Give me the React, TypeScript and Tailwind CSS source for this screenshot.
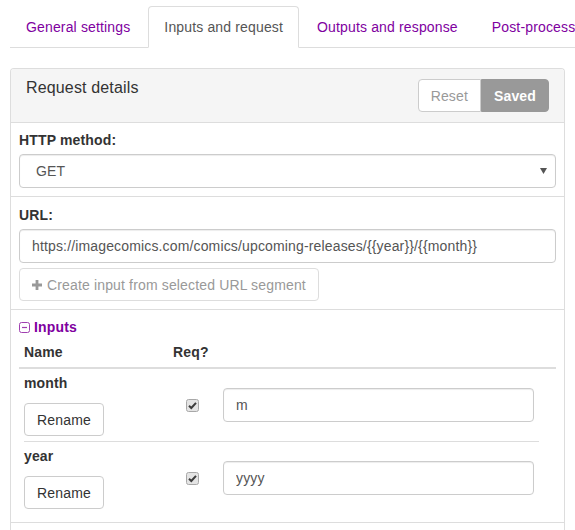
import { useState } from 'react';

const tabs = ['General settings', 'Inputs and request', 'Outputs and response', 'Post-processing'];

type Input = {
    name: string;
    required: boolean;
    placeholder: string;
};

const inputs: Input[] = [
    { name: 'month', required: true, placeholder: 'm' },
    { name: 'year', required: true, placeholder: 'yyyy' },
];

function Checkbox() {
    return (
        <svg width="13" height="13" viewBox="0 0 13 13">
            <rect x="0.5" y="0.5" width="12" height="12" rx="2" fill="#e4e4e4" stroke="#a8a8a8" />
            <path d="M3 6.8 L5.3 9 L10 3.8" fill="none" stroke="#3c3c3c" strokeWidth="2" />
        </svg>
    );
}

export default function App() {
    const [active, setActive] = useState(1);
    const [url, setUrl] = useState(
        'https://imagecomics.com/comics/upcoming-releases/{{year}}/{{month}}',
    );

    return (
        <div className="min-h-[530px] w-[575px] overflow-hidden bg-white font-['Liberation_Sans',Arial,sans-serif] text-[14px] leading-[20px] tracking-[0.15px] text-[#333]">
            {/* Tabs */}
            <ul className="ml-[10px] mt-[6px] flex whitespace-nowrap border-b border-[#ddd]">
                {tabs.map((tab, i) => (
                    <li key={tab} className="-mb-px mr-[2px]">
                        <a
                            onClick={() => setActive(i)}
                            className={
                                i === active
                                    ? 'block cursor-pointer rounded-t-[4px] border border-[#ddd] border-b-white bg-white px-[15px] py-[10px] text-[#555]'
                                    : 'block cursor-pointer rounded-t-[4px] border border-transparent px-[15px] py-[10px] text-[#8000a0]'
                            }
                        >
                            {tab}
                        </a>
                    </li>
                ))}
            </ul>

            {/* Panel */}
            <div className="ml-[10px] mt-[20px] w-[555px] rounded-t-[4px] border border-b-0 border-[#ddd]">
                <div className="flex items-start justify-between rounded-t-[3px] border-b border-[#ddd] bg-[#f5f5f5] px-[15px] py-[10px]">
                    <h3 className="text-[16px] leading-[18px] text-[#333]">Request details</h3>
                    <div className="flex h-[33px]">
                        <button className="rounded-l-[4px] border border-[#ccc] bg-white px-[12px] text-[#999]">
                            Reset
                        </button>
                        <button className="rounded-r-[4px] border border-[#999] bg-[#999] px-[12px] font-bold text-white">
                            Saved
                        </button>
                    </div>
                </div>

                {/* HTTP method */}
                <div className="border-b border-[#ddd] px-[8px] pb-[8px] pt-[7px]">
                    <label className="mb-[4px] block font-bold">HTTP method:</label>
                    <div className="flex h-[34px] items-center justify-between rounded-[4px] border border-[#ccc] pl-[16px] pr-[8px] text-[#555] shadow-[inset_0_1px_1px_rgba(0,0,0,0.075)]">
                        <span>GET</span>
                        <svg width="7" height="6" viewBox="0 0 7 6">
                            <path d="M0 0 H7 L3.5 6 Z" fill="#555" />
                        </svg>
                    </div>
                </div>

                {/* URL */}
                <div className="border-b border-[#ddd] p-[8px]">
                    <label className="mb-[4px] block font-bold">URL:</label>
                    <input
                        value={url}
                        onChange={(e) => setUrl(e.target.value)}
                        className="block h-[34px] w-full rounded-[4px] border border-[#ccc] px-[12px] text-[#555] shadow-[inset_0_1px_1px_rgba(0,0,0,0.075)] outline-none"
                    />
                    <button
                        disabled
                        className="mt-[5px] flex h-[33px] items-center gap-[5px] rounded-[4px] border border-[#ddd] bg-white px-[12px] text-[#999]"
                    >
                        <svg width="10" height="10" viewBox="0 0 10 10">
                            <path d="M3.6 0 H6.4 V3.6 H10 V6.4 H6.4 V10 H3.6 V6.4 H0 V3.6 H3.6 Z" fill="#999" />
                        </svg>
                        Create input from selected URL segment
                    </button>
                </div>

                {/* Inputs */}
                <div className="border-b border-[#ddd] px-[8px] pb-[8px] pt-[7px]">
                    <div className="flex items-center gap-[4px] font-bold text-[#8000a0]">
                        <svg width="11" height="11" viewBox="0 0 11 11">
                            <rect x="0.5" y="0.5" width="10" height="10" rx="2" fill="none" stroke="#a040b0" />
                            <path d="M3 5.5 H8" stroke="#a040b0" strokeWidth="1.2" />
                        </svg>
                        <span>Inputs</span>
                    </div>
                    <div className="flex border-b-2 border-[#ddd] py-[5px] font-bold">
                        <div className="w-[149px] pl-[5px]">Name</div>
                        <div className="pl-[5px]">Req?</div>
                    </div>
                    {inputs.map((input, i) => (
                        <div
                            key={input.name}
                            className={
                                i < inputs.length - 1
                                    ? 'ml-[5px] flex w-[515px] items-center border-b border-[#ddd]'
                                    : 'ml-[5px] flex w-[515px] items-center'
                            }
                        >
                            <div className="w-[144px] pb-[5px] pt-[4px]">
                                <div className="mb-[10px] font-bold">{input.name}</div>
                                <button className="h-[33px] w-[80px] rounded-[4px] border border-[#ccc] bg-white text-[#333]">
                                    Rename
                                </button>
                            </div>
                            <div className="w-[55px] pl-[18px]">{input.required && <Checkbox />}</div>
                            <input
                                placeholder={input.placeholder}
                                className="h-[34px] w-[311px] rounded-[4px] border border-[#ccc] px-[12px] text-[#555] shadow-[inset_0_1px_1px_rgba(0,0,0,0.075)] outline-none placeholder:text-[#555]"
                            />
                        </div>
                    ))}
                </div>
                <div className="h-[20px]" />
            </div>
        </div>
    );
}
